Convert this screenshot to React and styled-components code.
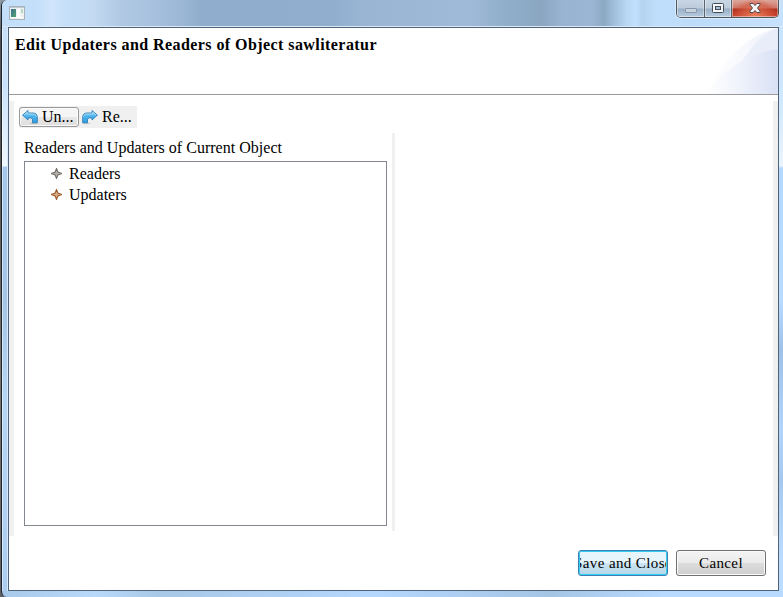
import React from "react";
import styled, { createGlobalStyle } from "styled-components";

const Global = createGlobalStyle`
  * { box-sizing: border-box; }
  body { margin: 0; overflow: hidden; background: #55575b; }
  svg { display: block; flex: none; }
`;

const Desktop = styled.div`
  width: 783px;
  height: 597px;
  padding-left: 1px;
  background: linear-gradient(#9299a0 0, #4e5156 40px, #5b5754 180px, #77736f 380px, #5f6064 597px);
  font: 16px "Liberation Serif", serif;
  color: #000;
`;

const WindowFrame = styled.div`
  display: flex;
  flex-direction: column;
  width: 782px;
  height: 597px;
  border-left: 1px solid #1d252e;
  border-radius: 6px 0 0 6px;
  padding: 0 4px 6px 6px;
  background:
    linear-gradient(90deg, #ffffff88 0 1px, transparent 1px 5px, #d7e9fa 5px 6px, transparent 6px) 0 28px / 100% 563px no-repeat,
    linear-gradient(90deg, #a9c9eb, #b9d9fb 12%, #a8c8e7 20%, #b4d7fd 48%, #a5c5e5 70%, #b8dafe 85%) 0 590px / 100% 7px no-repeat,
    linear-gradient(#c5dff8 0, #c9e2fb 85px, #f0f7ff 166px, #a4c7eb 167px, #a5c5e7 300px, #b5d5f5 400px, #abcdf0 597px) 0 0 / 8px 100% no-repeat,
    linear-gradient(#c6e2fd 0, #d2e9fe 110px, #eaf5ff 166px, #b4d8fe 168px, #b8dbff 300px, #9fc1e5 350px, #b2d4f8 430px, #a6c8ec 480px, #bbdcfe 560px) 100% 0 / 6px 100% no-repeat,
    #b5d5f5;
`;

const TitleBar = styled.header`
  display: flex;
  justify-content: space-between;
  align-items: flex-start;
  flex: none;
  height: 27px;
  margin: 0 -4px 0 -6px;
  padding: 0 4px 0 6px;
  border-bottom: 1px solid #dceaf6;
  border-top-left-radius: 6px;
  background: linear-gradient(90deg,
    #c3def8 0, #c4dff9 34px, #d1e6fb 50px, #c5dff8 64px, #c3daf2 90px, #b0c8e2 120px,
    #a7c1df 150px, #9cb8d6 178px, #90adcd 200px, #91aecf 330px, #9ab5d4 360px,
    #9fbad8 470px, #91aecb 500px, #8aa6c1 540px, #99b4d2 560px, #9bb6d4 590px,
    #8ca9c4 602px, #9fbfdc 612px, #b9d8f4 625px, #c1e0fd 634px, #b5d4f0 640px, #bfdefb 654px, #bddcfb 700px, #c6e1fb 782px);
`;

const AppIcon = styled.div`
  display: flex;
  margin: 6px 0 0 1px;
`;

const Captions = styled.div`
  display: flex;
  height: 18px;
  border: 1px solid #4b5663;
  border-top: 0;
  border-radius: 0 0 5px 5px;
  overflow: hidden;
  box-shadow: 0 0 0 1px #ddecf9;
`;

const captionFills = {
  plain: "linear-gradient(#c9d6e4 0, #bccbdb 8px, #9aafc5 9px, #b9cce0 17px)",
  close: "radial-gradient(ellipse at 50% 100%, #e9805b 0, #d4543b88 55%, transparent 75%), linear-gradient(#dda69b 0, #cd7868 8px, #aa2e1d 9px, #c9432c 17px)",
};

const CaptionButton = styled.div`
  display: flex;
  justify-content: center;
  width: ${(p) => p.$width}px;
  padding-top: ${(p) => p.$drop || 3}px;
  border-left: ${(p) => (p.$first ? 0 : "1px solid #596471")};
  background: ${(p) => captionFills[p.$kind || "plain"]};
  box-shadow: inset 1px -1px 0 #ffffff70, inset -1px 0 0 #ffffff55;
`;

const Client = styled.main`
  display: flex;
  flex-direction: column;
  flex: 1;
  border: 1px solid #4f647b;
  background: #fff;
`;

const Header = styled.div`
  display: flex;
  justify-content: space-between;
  flex: none;
  height: 67px;
  padding-left: 6px;
  border-bottom: 1px solid #9b9a9c;
`;

const Heading = styled.h1`
  margin: 7px 0 0;
  font-size: 16px;
  line-height: 20px;
  letter-spacing: 0.43px;
  white-space: nowrap;
`;

const Body = styled.section`
  display: flex;
  flex: none;
  height: 435px;
  margin-top: 6px;
  border: solid #f0f0f0;
  border-width: 0 5px;
`;

const LeftPane = styled.div`
  width: 373px;
  padding: 5px 0 0 5px;
`;

const Toolbar = styled.div`
  display: flex;
  width: 118px;
  height: 22px;
  padding: 1px 0;
  background: #f0f0f0;
`;

const ToolButton = styled.div`
  display: flex;
  align-items: center;
  gap: 4px;
  width: ${(p) => (p.$raised ? 60 : 56)}px;
  height: 20px;
  padding-left: 2px;
  border: 1px solid ${(p) => (p.$raised ? "#9a9a9a" : "transparent")};
  border-radius: 3px;
  background: ${(p) => (p.$raised ? "linear-gradient(#f5f5f5 0 48%, #e7e7e7 52%, #dedede)" : "none")};
  box-shadow: ${(p) => (p.$raised ? "inset 0 0 0 1px #fafafa" : "none")};
  line-height: 18px;
`;

const TreeLabel = styled.div`
  margin: 9px 0 4px 5px;
  height: 20px;
  line-height: 21px;
  letter-spacing: 0.02px;
  white-space: nowrap;
`;

const Tree = styled.div`
  width: 363px;
  height: 365px;
  margin-left: 5px;
  padding: 1px 0 0 26px;
  border: 1px solid #828790;
`;

const TreeItem = styled.div`
  display: flex;
  align-items: center;
  gap: 7px;
  height: 21px;
  line-height: 21px;
`;

const Sash = styled.div`
  width: 3px;
  height: 398px;
  margin: 32px 0 0 5px;
  background: #f0f0f0;
`;

const Footer = styled.footer`
  display: flex;
  justify-content: flex-end;
  gap: 8px;
  padding: 14px 12px 0 0;
`;

const PushButton = styled.div`
  display: flex;
  align-items: center;
  justify-content: center;
  width: 90px;
  height: 26px;
  border: 1px solid ${(p) => (p.$default ? "#3c7fb1" : "#707070")};
  border-radius: 3px;
  background: ${(p) => (p.$default
    ? "linear-gradient(#e6f4fb 0 48%, #cce5f2 50%, #b5d6e7)"
    : "linear-gradient(#f3f3f3 0, #ebebeb 48%, #dddddd 50%, #cecece)")};
  box-shadow: inset 0 0 0 1px ${(p) => (p.$default ? "#35cbf5" : "#fafafa")};
`;

const ButtonText = styled.span`
  display: flex;
  justify-content: center;
  width: 86px;
  overflow: hidden;
  font-size: 15px;
  line-height: 22px;
  letter-spacing: 0.38px;
  white-space: nowrap;
`;

const WindowGlyph = () => (
  <svg width="16" height="14" viewBox="0 0 16 14">
    <defs>
      <linearGradient id="pane" x2="1" y2="1">
        <stop stopColor="#3f6f91" />
        <stop offset="1" stopColor="#51a66d" />
      </linearGradient>
    </defs>
    <rect x=".5" y=".5" width="15" height="13" fill="#eef1f2" stroke="#a7b2ba" />
    <path d="M1 1.5h14" stroke="#c1c9d2" />
    <rect x="2" y="3" width="5" height="8" fill="url(#pane)" />
    <rect x="8" y="3" width="3" height="8" fill="#fff" />
    <rect x="12" y="3" width="2" height="4" fill="#b8d9bf" />
    <path d="M2 11.5h12" stroke="#fff" />
  </svg>
);

const Swoosh = () => (
  <svg width="72" height="66" viewBox="0 0 72 66">
    <defs>
      <linearGradient id="outer">
        <stop stopColor="#fff" />
        <stop offset=".5" stopColor="#f8f9fd" />
        <stop offset="1" stopColor="#eef1fb" />
      </linearGradient>
      <linearGradient id="inner">
        <stop stopColor="#fff" />
        <stop offset=".45" stopColor="#f0f3fb" />
        <stop offset="1" stopColor="#d9e1f5" />
      </linearGradient>
    </defs>
    <path d="M0 66C17 30 42 7 72 0V66Z" fill="url(#outer)" />
    <path d="M34 37C46 17 58 5 72 0V24Z" fill="#e4eaf8" opacity=".65" />
    <path d="M0 66C17 42 40 26 72 21V66Z" fill="url(#inner)" />
  </svg>
);

const CurvedArrow = ({ forward }) => (
  <svg width="16" height="16" viewBox="0 0 16 16">
    <defs>
      <linearGradient id="arrow" x2="0" y2="1">
        <stop stopColor="#8bd0f5" />
        <stop offset=".5" stopColor="#4db3ea" />
        <stop offset="1" stopColor="#2d9fe3" />
      </linearGradient>
    </defs>
    <g transform={forward ? "translate(16 0) scale(-1 1)" : undefined}>
      <ellipse cx="11.5" cy="14.3" rx="4" ry=".9" fill="#a5a5a5" opacity=".45" />
      <path d="M.6 6.2 6 1.5V4h5c2.7 0 4.3 1.5 4.3 4.5v5.3h-4.8V11c0-1.4-.6-2.1-2-2.1H6V11Z" fill="url(#arrow)" stroke="#2f7db8" strokeWidth=".9" strokeLinejoin="round" />
      <path d="M2 6.1 5.2 3.4V5H11c1.8 0 2.9.9 3.2 2.7" fill="none" stroke="#c3eafb" strokeWidth=".7" />
    </g>
  </svg>
);

const Star = ({ outline, fill }) => (
  <svg width="11" height="11" viewBox="0 0 11 11">
    <path d="M5.5.5 6.9 4.1l3.6 1.4L6.9 6.9 5.5 10.5 4.1 6.9.5 5.5l3.6-1.4Z" fill={fill} stroke={outline} strokeWidth="1.1" />
  </svg>
);

const MinimizeGlyph = () => (
  <svg width="12" height="5" viewBox="0 0 12 5">
    <rect x=".5" y=".5" width="11" height="4" rx=".5" fill="#c7d3df" stroke="#8998aa" />
  </svg>
);

const MaximizeGlyph = () => (
  <svg width="12" height="10" viewBox="0 0 12 10">
    <rect x=".5" y=".5" width="11" height="9" rx="1" fill="#f5f6f8" stroke="#434c5b" />
    <rect x="3.5" y="3.5" width="5" height="3" fill="#a9bdd0" stroke="#434c5b" />
  </svg>
);

const CloseGlyph = () => (
  <svg width="12" height="10" viewBox="0 0 12 10">
    <path d="M1 .5h3.2L6 2.5 7.8.5H11v1.3L8.5 5 11 8.2v1.3H7.8L6 7.5l-1.8 2H1V8.2L3.5 5 1 1.8Z" fill="#f4f4f5" stroke="#54474f" />
  </svg>
);

export default function App() {
  return (
    <>
      <Global />
      <Desktop>
        <WindowFrame>
          <TitleBar>
            <AppIcon><WindowGlyph /></AppIcon>
            <Captions>
              <CaptionButton $first $width={27} $drop={8}><MinimizeGlyph /></CaptionButton>
              <CaptionButton $width={27}><MaximizeGlyph /></CaptionButton>
              <CaptionButton $width={47} $kind="close"><CloseGlyph /></CaptionButton>
            </Captions>
          </TitleBar>
          <Client>
            <Header>
              <Heading>Edit Updaters and Readers of Object sawliteratur</Heading>
              <Swoosh />
            </Header>
            <Body>
              <LeftPane>
                <Toolbar>
                  <ToolButton $raised><CurvedArrow />Un...</ToolButton>
                  <ToolButton><CurvedArrow forward />Re...</ToolButton>
                </Toolbar>
                <TreeLabel>Readers and Updaters of Current Object</TreeLabel>
                <Tree>
                  <TreeItem><Star outline="#706c68" fill="#b9b1a9" />Readers</TreeItem>
                  <TreeItem><Star outline="#99592b" fill="#dcae84" />Updaters</TreeItem>
                </Tree>
              </LeftPane>
              <Sash />
            </Body>
            <Footer>
              <PushButton $default><ButtonText>Save and Close</ButtonText></PushButton>
              <PushButton><ButtonText>Cancel</ButtonText></PushButton>
            </Footer>
          </Client>
        </WindowFrame>
      </Desktop>
    </>
  );
}
